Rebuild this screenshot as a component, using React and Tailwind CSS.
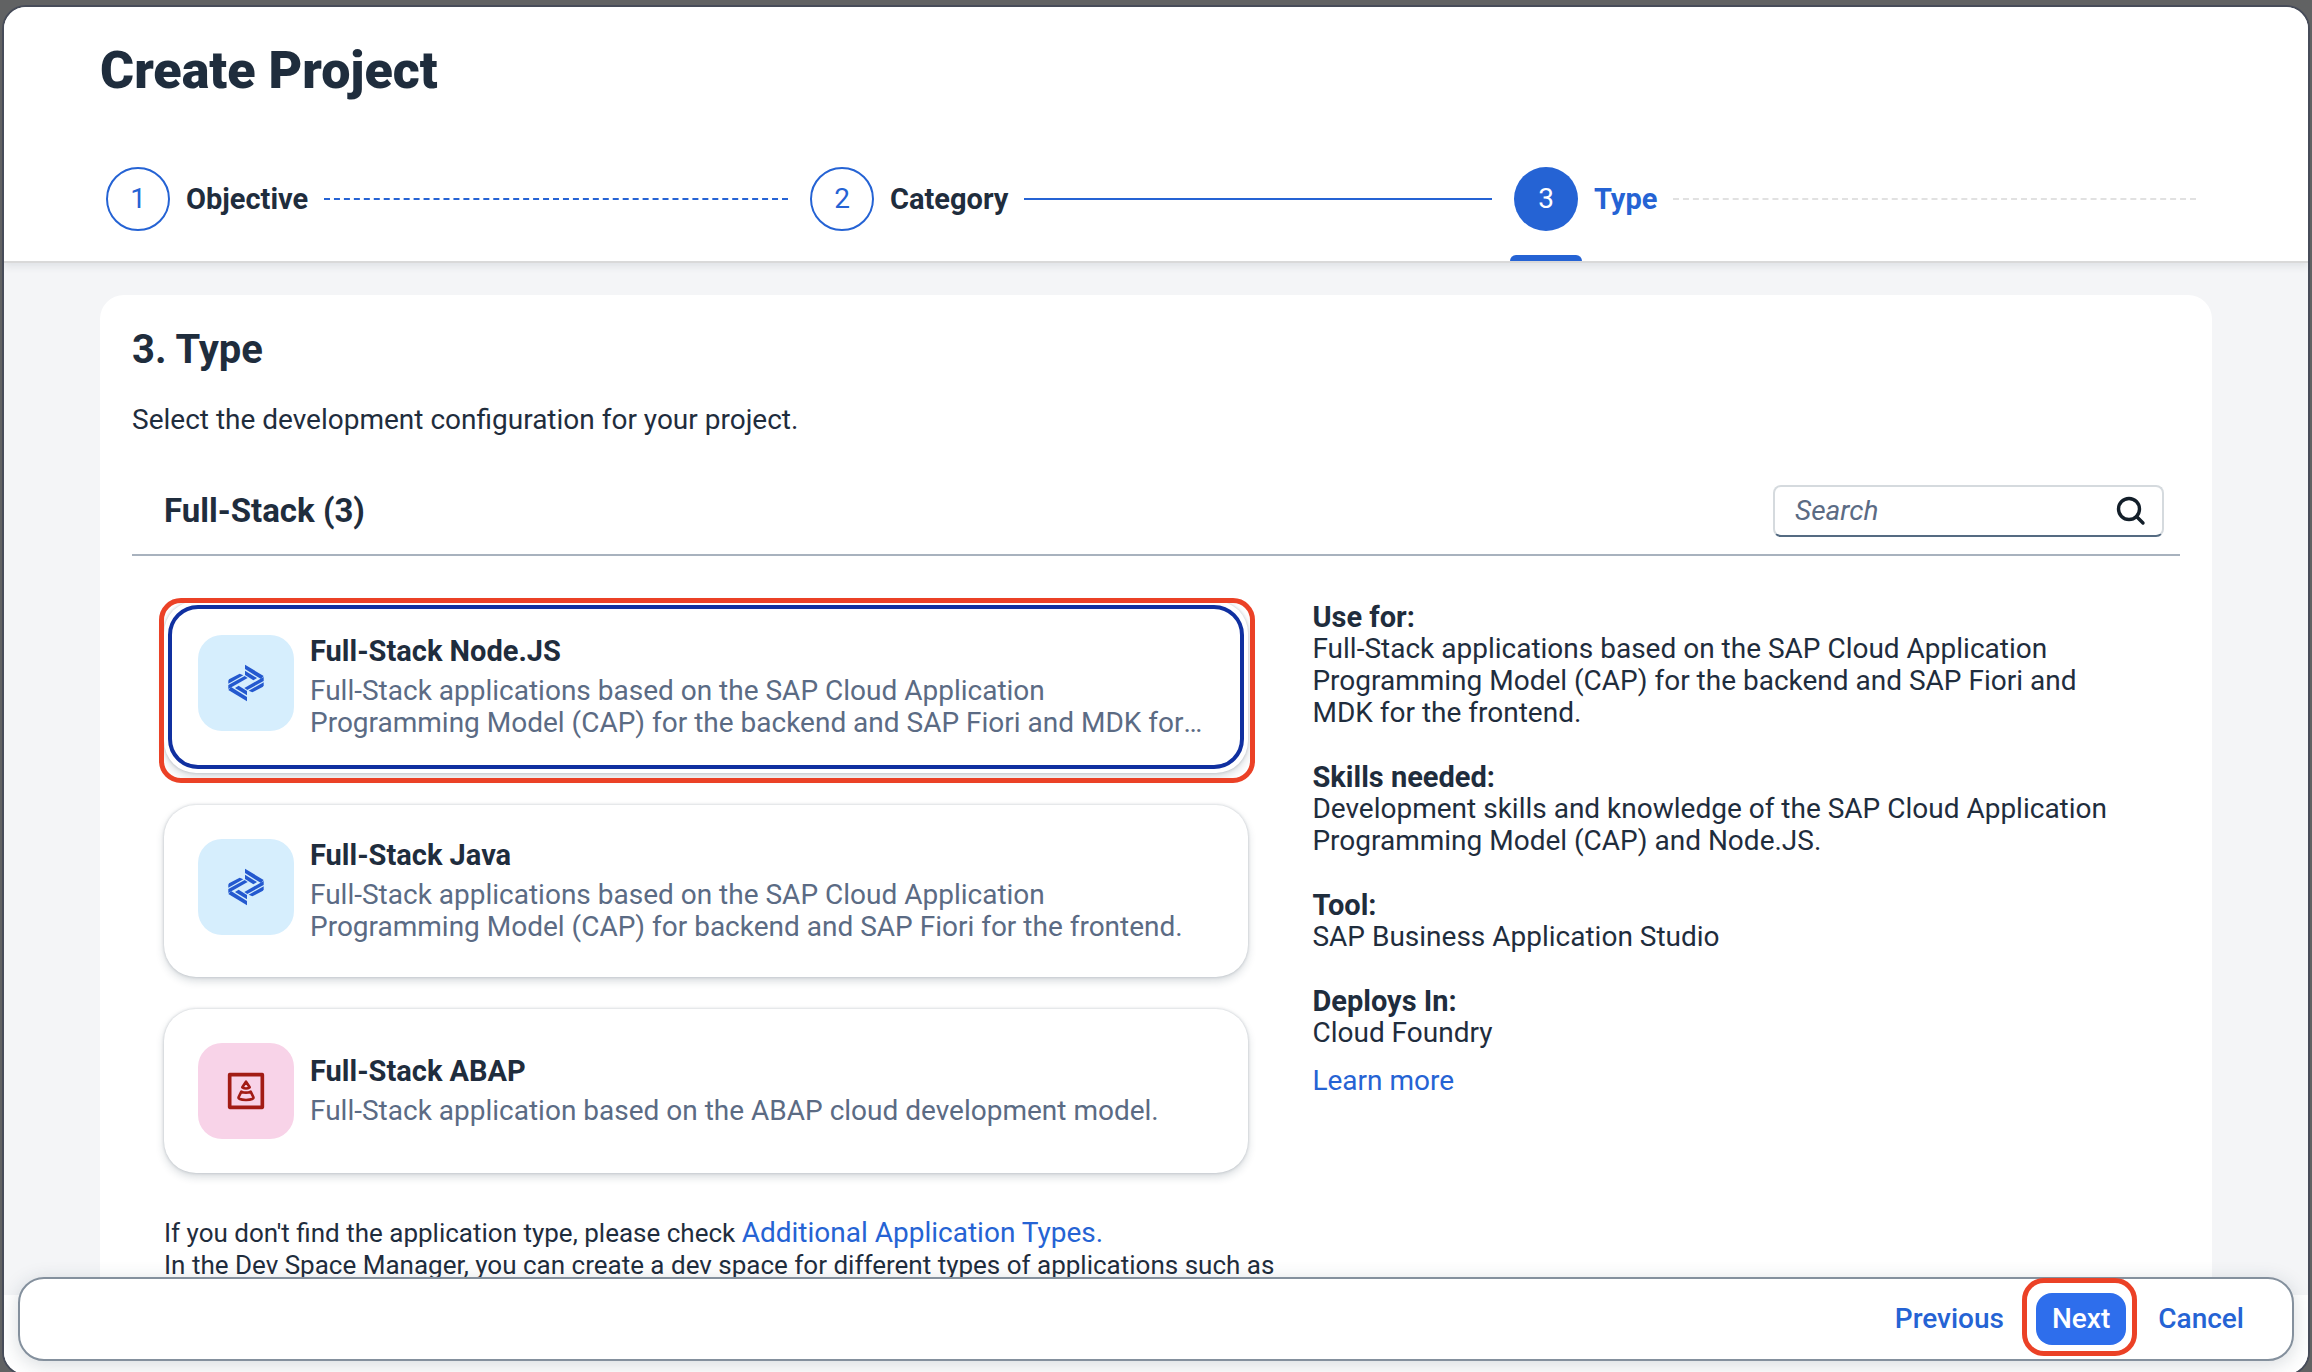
import React from "react";

const steps = [
  { id: 1, label: "Objective", line: "border-dashed border-[#2563d4]" },
  { id: 2, label: "Category", line: "border-solid border-[#2563d4]" },
  { id: 3, label: "Type", line: "border-dashed border-[#e1e1e1]", active: true },
];

const types = [
  {
    title: "Full-Stack Node.JS",
    text: "Full-Stack applications based on the SAP Cloud Application Programming Model (CAP) for the backend and SAP Fiori and MDK for the frontend.",
    icon: "cap",
    selected: true,
  },
  {
    title: "Full-Stack Java",
    text: "Full-Stack applications based on the SAP Cloud Application Programming Model (CAP) for backend and SAP Fiori for the frontend.",
    icon: "cap",
  },
  {
    title: "Full-Stack ABAP",
    text: "Full-Stack application based on the ABAP cloud development model.",
    icon: "abap",
  },
];

const details = [
  {
    term: "Use for:",
    text: "Full-Stack applications based on the SAP Cloud Application Programming Model (CAP) for the backend and SAP Fiori and MDK for the frontend.",
  },
  {
    term: "Skills needed:",
    text: "Development skills and knowledge of the SAP Cloud Application Programming Model (CAP) and Node.JS.",
  },
  { term: "Tool:", text: "SAP Business Application Studio" },
  { term: "Deploys In:", text: "Cloud Foundry" },
];

function CapHalf() {
  return (
    <>
      <path d="M69 14 125 48 117 57 69 27Z" />
      <path d="M69 32 105 54 94 61 69 45Z" />
      <path d="M21 58 53 41 64 46 19 71V62Z" />
      <path d="M19 75 68 48 77 54 19 87Z" />
    </>
  );
}

function CapIcon() {
  return (
    <svg viewBox="0 -3 144 144" className="size-12" fill="#2459cf" aria-hidden="true">
      <CapHalf />
      <g transform="rotate(180 72 69)">
        <CapHalf />
      </g>
    </svg>
  );
}

function AbapIcon() {
  return (
    <svg viewBox="0 3 144 144" className="size-12" fill="none" stroke="#a21c15" strokeLinejoin="round" aria-hidden="true">
      <rect x="23" y="26" width="98" height="98" strokeWidth="11" />
      <path d="M72 47 61 64Q72 71 83 64Z" strokeWidth="8" />
      <path d="M58 77 50 93Q46 101 72 102 98 101 94 93L86 77Q72 83 58 77Z" strokeWidth="8" />
    </svg>
  );
}

function TypeCard({ item }) {
  return (
    <li className="relative">
      <button
        type="button"
        aria-pressed={!!item.selected}
        className="relative flex w-full items-start gap-4 rounded-[32px] bg-white p-[34px] text-left shadow-[0_0_3px_rgba(34,53,72,0.25),0_4px_8px_rgba(34,53,72,0.18)]"
      >
        {item.selected && (
          <span className="absolute inset-1 rounded-[30px] border-4 border-[#1030a0]" />
        )}
        <span
          className={
            item.icon === "cap"
              ? "flex size-24 shrink-0 items-center justify-center rounded-3xl bg-[#d6eefd]"
              : "flex size-24 shrink-0 items-center justify-center rounded-3xl bg-[#f8d3e8]"
          }
        >
          {item.icon === "cap" ? <CapIcon /> : <AbapIcon />}
        </span>
        <span className="flex min-w-0 flex-col gap-2 self-center">
          <span className="text-[29px] leading-8 font-bold">{item.title}</span>
          <span className="line-clamp-2 text-[28px] leading-8 text-[#5b6b84]">{item.text}</span>
        </span>
      </button>
      {item.selected && (
        <span className="pointer-events-none absolute -top-[3px] -right-[7px] -bottom-[10px] -left-[5px] rounded-[22px] border-[5px] border-[#eb4126]" />
      )}
    </li>
  );
}

export default function App() {
  return (
    <div className="flex h-screen flex-col overflow-hidden bg-[#616263] px-0.5 pt-[5px] font-['Roboto',sans-serif] text-[28px] leading-8 text-[#1f2d3d]">
      <main className="-mb-1 flex min-h-0 flex-1 flex-col overflow-hidden rounded-[24px] border-2 border-[#474c59] bg-white">
        <header className="relative z-10 shrink-0 border-b-2 border-[#d9d9d9] bg-white px-24 pt-10 shadow-[0_3px_8px_rgba(34,53,72,0.1)]">
          <h1 className="text-[52px] leading-[48px] font-black">Create Project</h1>
          <ol className="mt-[66px] grid grid-cols-3">
            {steps.map((s) => (
              <li
                key={s.id}
                aria-current={s.active ? "step" : undefined}
                className="flex items-start pr-4"
              >
                <span className="flex w-[76px] shrink-0 flex-col items-center gap-6 pt-1.5">
                  <span
                    className={
                      s.active
                        ? "flex size-16 items-center justify-center rounded-full bg-[#2563d4] text-white"
                        : "flex size-16 items-center justify-center rounded-full border-2 border-[#2563d4] text-[#2563d4]"
                    }
                  >
                    {s.id}
                  </span>
                  <span
                    className={
                      s.active
                        ? "h-1.5 w-[72px] rounded-t-md bg-[#2563d4]"
                        : "h-1.5 w-[72px]"
                    }
                  />
                </span>
                <span className="flex h-[76px] flex-1 items-center gap-4 pl-2.5">
                  <span className={s.active ? "text-[29px] font-bold text-[#2563d4]" : "text-[29px] font-bold"}>
                    {s.label}
                  </span>
                  <span className={"flex-1 border-t-2 " + s.line} />
                </span>
              </li>
            ))}
          </ol>
        </header>

        <div className="min-h-0 flex-1 overflow-hidden bg-[#f4f5f7] px-24 pt-8">
          <section className="min-h-full rounded-t-3xl bg-white px-8 pt-[31px]">
            <h2 className="text-[40px] leading-[48px] font-bold">3. Type</h2>
            <p className="mt-[30px]">Select the development configuration for your project.</p>

            <div className="mt-[49px] flex items-center justify-between border-b-2 border-[#a8b2be] pr-4 pb-[17px] pl-8">
              <h3 className="text-[33px] leading-10 font-bold">Full-Stack (3)</h3>
              <label className="flex h-[52px] w-[391px] items-center gap-3 rounded-lg border-2 border-[#d5dade] border-b-[#556b82] bg-white pr-4 pl-5">
                <input
                  type="search"
                  aria-label="Search"
                  placeholder="Search"
                  className="min-w-0 flex-1 bg-transparent outline-none placeholder:text-[#5b6b84] placeholder:italic"
                />
                <svg viewBox="0 0 30 30" className="size-[30px]" fill="none" stroke="#131e29" strokeLinecap="round" aria-hidden="true">
                  <circle cx="13" cy="13" r="10.5" strokeWidth="3.4" />
                  <path d="M20.5 20.5 27 27" strokeWidth="3.4" />
                </svg>
              </label>
            </div>

            <div className="mt-[45px] grid grid-cols-[5fr_4fr] gap-16 pl-8">
              <ul className="flex flex-col gap-8">
                {types.map((t) => (
                  <TypeCard key={t.title} item={t} />
                ))}
              </ul>
              <div className="pr-16">
                <dl className="flex flex-col gap-8">
                  {details.map((d) => (
                    <div key={d.term}>
                      <dt className="text-[29px] font-bold">{d.term}</dt>
                      <dd>{d.text}</dd>
                    </div>
                  ))}
                </dl>
                <a href="#learn-more" className="mt-4 inline-block text-[#2563d4]">
                  Learn more
                </a>
              </div>
            </div>

            <p className="mt-[44px] max-w-[1240px] pl-8 text-[26px] leading-8">
              If you don't find the application type, please check{" "}
              <a href="#additional-types" className="text-[28px] text-[#2563d4]">
                Additional Application Types.
              </a>
              <br />
              In the Dev Space Manager, you can create a dev space for different types of applications such as
            </p>
          </section>
        </div>

        <footer className="relative z-10 shrink-0 bg-white px-3.5 pb-[13px]">
          <div className="relative -mt-[18px] flex h-[84px] items-center justify-end gap-4 rounded-[26px] border-2 border-[#84909d] bg-white pr-8 font-medium text-[#2563d4] shadow-[0_4px_20px_rgba(34,53,72,0.18)]">
            <button type="button" className="h-[52px] px-4">Previous</button>
            <span className="relative">
              <button type="button" className="h-[52px] rounded-2xl bg-[#2e6eec] px-4 text-white">Next</button>
              <span className="pointer-events-none absolute -top-[15px] -right-[11px] -bottom-[11px] -left-[14px] rounded-[22px] border-[5px] border-[#eb4126]" />
            </span>
            <button type="button" className="h-[52px] px-4">Cancel</button>
          </div>
        </footer>
      </main>
    </div>
  );
}
